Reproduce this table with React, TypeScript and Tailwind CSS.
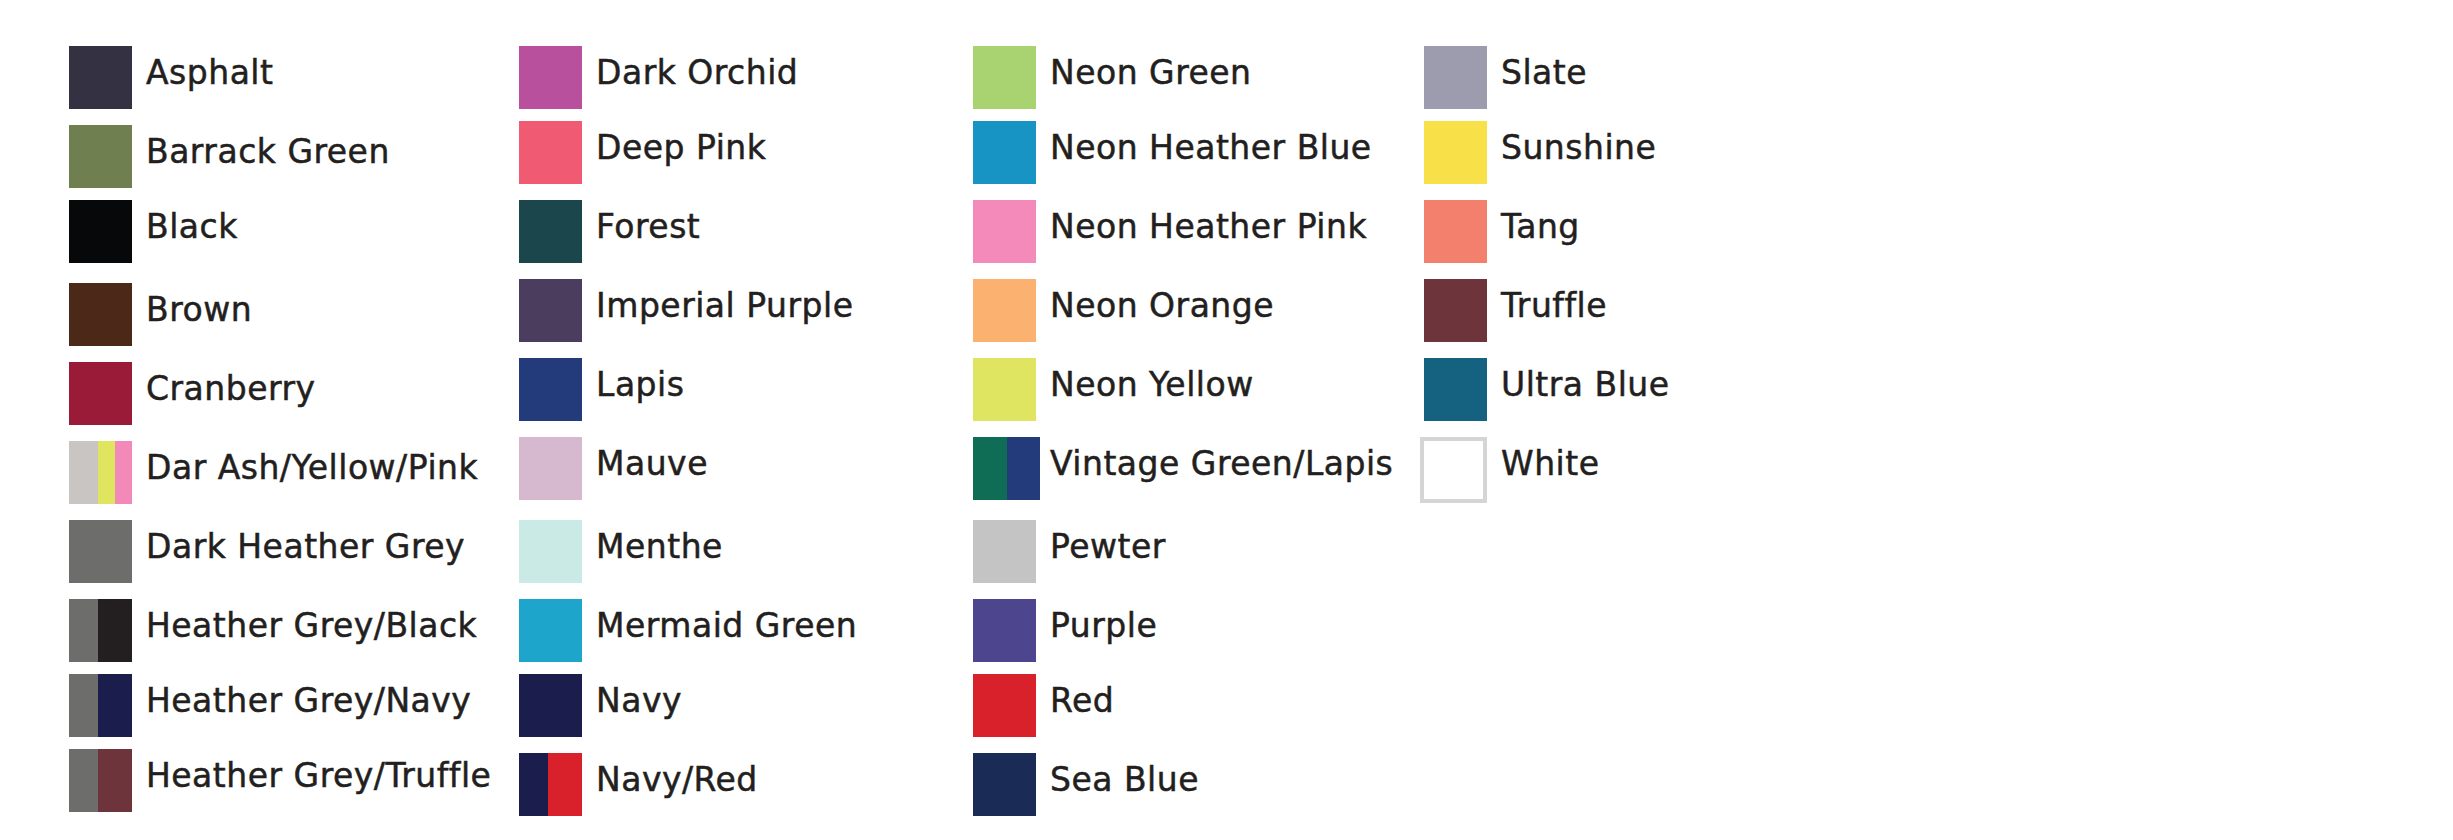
type Swatch = {
  name: string;
  colors: string[];
  gap: string;
  split?: string[];
  wide?: boolean;
  outline?: boolean;
};

// split widths for multi-colour swatches are written out so tailwind picks them up
const columns: { width: string; items: Swatch[] }[] = [
  {
    width: "w-[450px]",
    items: [
      { name: "Asphalt", colors: ["bg-[#343142]"], gap: "mt-0" },
      { name: "Barrack Green", colors: ["bg-[#6f7f4f]"], gap: "mt-[16px]" },
      { name: "Black", colors: ["bg-[#07080a]"], gap: "mt-[12px]" },
      { name: "Brown", colors: ["bg-[#4c2818]"], gap: "mt-[20px]" },
      { name: "Cranberry", colors: ["bg-[#9a1b37]"], gap: "mt-[16px]" },
      {
        name: "Dar Ash/Yellow/Pink",
        colors: ["bg-[#c9c5c2]", "bg-[#dfe55f]", "bg-[#f389b9]"],
        split: ["w-[29px]", "w-[17px]", "w-[17px]"],
        gap: "mt-[16px]",
      },
      { name: "Dark Heather Grey", colors: ["bg-[#6d6e6c]"], gap: "mt-[16px]" },
      {
        name: "Heather Grey/Black",
        colors: ["bg-[#6d6e6c]", "bg-[#231f20]"],
        split: ["w-[29px]", "w-[34px]"],
        gap: "mt-[16px]",
      },
      {
        name: "Heather Grey/Navy",
        colors: ["bg-[#6d6e6c]", "bg-[#1b1d4d]"],
        split: ["w-[29px]", "w-[34px]"],
        gap: "mt-[12px]",
      },
      {
        name: "Heather Grey/Truffle",
        colors: ["bg-[#6d6e6c]", "bg-[#6d343b]"],
        split: ["w-[29px]", "w-[34px]"],
        gap: "mt-[12px]",
      },
    ],
  },
  {
    width: "w-[454px]",
    items: [
      { name: "Dark Orchid", colors: ["bg-[#b8509e]"], gap: "mt-0" },
      { name: "Deep Pink", colors: ["bg-[#f05a72]"], gap: "mt-[12px]" },
      { name: "Forest", colors: ["bg-[#1b464b]"], gap: "mt-[16px]" },
      { name: "Imperial Purple", colors: ["bg-[#4b3d5e]"], gap: "mt-[16px]" },
      { name: "Lapis", colors: ["bg-[#233a7b]"], gap: "mt-[16px]" },
      { name: "Mauve", colors: ["bg-[#d6b9cf]"], gap: "mt-[16px]" },
      { name: "Menthe", colors: ["bg-[#caebe5]"], gap: "mt-[20px]" },
      { name: "Mermaid Green", colors: ["bg-[#1ea5cb]"], gap: "mt-[16px]" },
      { name: "Navy", colors: ["bg-[#1b1d4d]"], gap: "mt-[12px]" },
      {
        name: "Navy/Red",
        colors: ["bg-[#1b1d4d]", "bg-[#d9212b]"],
        split: ["w-[29px]", "w-[34px]"],
        gap: "mt-[16px]",
      },
    ],
  },
  {
    width: "w-[451px]",
    items: [
      { name: "Neon Green", colors: ["bg-[#a9d370]"], gap: "mt-0" },
      { name: "Neon Heather Blue", colors: ["bg-[#1794c3]"], gap: "mt-[12px]" },
      { name: "Neon Heather Pink", colors: ["bg-[#f38ab9]"], gap: "mt-[16px]" },
      { name: "Neon Orange", colors: ["bg-[#fbb16f]"], gap: "mt-[16px]" },
      { name: "Neon Yellow", colors: ["bg-[#dfe560]"], gap: "mt-[16px]" },
      {
        name: "Vintage Green/Lapis",
        colors: ["bg-[#0f6d55]", "bg-[#233a7b]"],
        split: ["w-[34px]", "w-[33px]"],
        wide: true,
        gap: "mt-[16px]",
      },
      { name: "Pewter", colors: ["bg-[#c4c4c4]"], gap: "mt-[20px]" },
      { name: "Purple", colors: ["bg-[#4d468f]"], gap: "mt-[16px]" },
      { name: "Red", colors: ["bg-[#d9212b]"], gap: "mt-[12px]" },
      { name: "Sea Blue", colors: ["bg-[#1a2c55]"], gap: "mt-[16px]" },
    ],
  },
  {
    width: "w-[400px]",
    items: [
      { name: "Slate", colors: ["bg-[#9d9bae]"], gap: "mt-0" },
      { name: "Sunshine", colors: ["bg-[#f8e049]"], gap: "mt-[12px]" },
      { name: "Tang", colors: ["bg-[#f3806d]"], gap: "mt-[16px]" },
      { name: "Truffle", colors: ["bg-[#6d343b]"], gap: "mt-[16px]" },
      { name: "Ultra Blue", colors: ["bg-[#146280]"], gap: "mt-[16px]" },
      { name: "White", colors: ["bg-white"], outline: true, gap: "mt-[16px]" },
    ],
  },
];

function Chip({ item }: { item: Swatch }) {
  if (item.outline) {
    return (
      <div className="-ml-[4px] h-[66px] w-[67px] shrink-0 border-[4px] border-[#d5d5d5] bg-white" />
    );
  }
  return (
    <div
      className={`flex h-[63px] shrink-0 ${item.wide ? "-mr-[4px] w-[67px]" : "w-[63px]"}`}
    >
      {item.colors.map((c, i) => (
        <div
          key={i}
          className={`h-full ${c} ${item.split ? item.split[i] : "w-full"}`}
        />
      ))}
    </div>
  );
}

export default function App() {
  return (
    <div
      className="flex h-[840px] w-full bg-white pl-[69px] pt-[46px] text-[#231f20]"
      style={{ fontFamily: '"DejaVu Sans", "Liberation Sans", sans-serif' }}
    >
      {columns.map((col, ci) => (
        <div key={ci} className={`flex shrink-0 flex-col ${col.width}`}>
          {col.items.map((item) => (
            <div key={item.name} className={`flex items-start gap-[14px] ${item.gap}`}>
              <Chip item={item} />
              <span className="mt-[10px] whitespace-nowrap text-[33px] leading-none tracking-[0.5px] [-webkit-text-stroke:0.5px_#231f20]">
                {item.name}
              </span>
            </div>
          ))}
        </div>
      ))}
    </div>
  );
}
